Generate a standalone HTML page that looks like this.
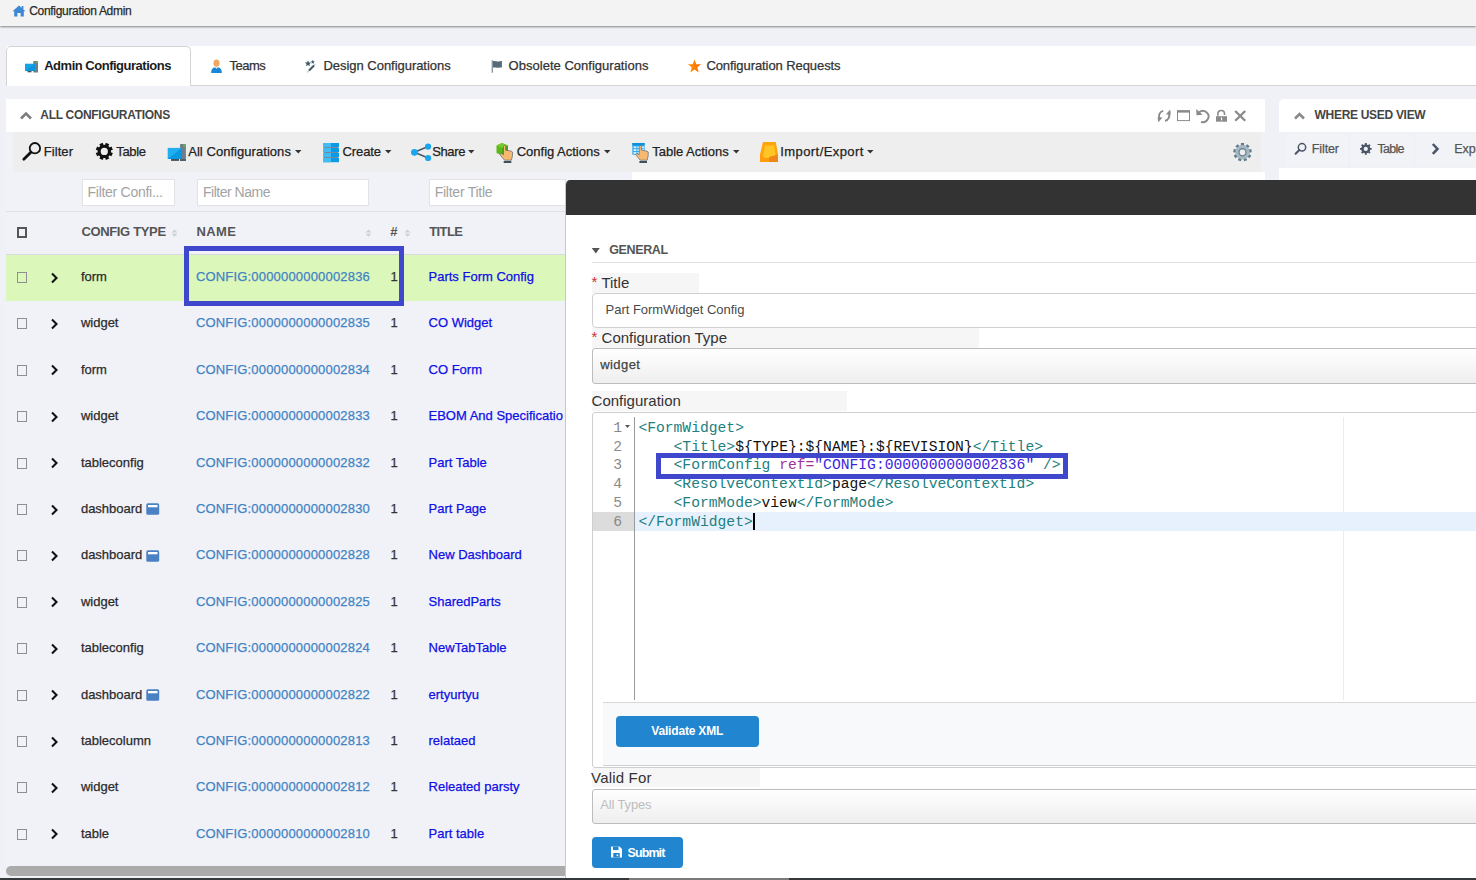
<!DOCTYPE html>
<html><head><meta charset="utf-8"><style>
html,body{margin:0;padding:0;width:1476px;height:880px;overflow:hidden;background:#f0f1f6;position:relative;font-family:'Liberation Sans', sans-serif}

div{}
</style></head><body>
<div style="position:absolute;left:0px;top:0px;width:1476px;height:26px;z-index:1;background:#f3f3f3;box-shadow:0 1px 2px rgba(0,0,0,.45);z-index:2"></div><svg style="position:absolute;left:12px;top:5px;z-index:2" width="14" height="12" viewBox="0 0 14 12"><path d="M7 0.5 L13.5 6.3 L11.8 6.3 L11.8 11.5 L8.6 11.5 L8.6 8 L5.4 8 L5.4 11.5 L2.2 11.5 L2.2 6.3 L0.5 6.3 Z" fill="#3d87d5"/><rect x="9.6" y="1" width="1.8" height="3" fill="#3d87d5"/></svg><div style="position:absolute;left:6px;top:46px;width:1470px;height:40px;z-index:1;background:#fff;border-bottom:1px solid #d4d4d5;box-sizing:border-box"></div><div style="position:absolute;left:6px;top:46px;width:185px;height:40px;z-index:1;background:#fff;border:1px solid #d4d4d5;border-bottom:none;border-radius:5px 5px 0 0;box-sizing:border-box"></div><svg style="position:absolute;left:24px;top:60px;z-index:2" width="15" height="14" viewBox="0 0 15 14"><rect x="9.3" y="1" width="4.7" height="11.5" rx="0.6" fill="#6f7f8a"/><rect x="11.8" y="1.6" width="1.6" height="1.4" fill="#6bc23a"/><rect x="1" y="3.7" width="10.2" height="7.3" fill="#17a3ea"/><path d="M1 11 L11.2 3.7 L11.2 11 Z" fill="#0b95dc"/><rect x="3.5" y="11" width="4" height="1.3" fill="#45535c"/></svg><svg style="position:absolute;left:210px;top:59px;z-index:2" width="14" height="15" viewBox="0 0 14 15"><ellipse cx="6.5" cy="4.2" rx="3" ry="3.6" fill="#f2a65e"/><path d="M1.2 14 C1.2 10 3 8.6 5 8.6 L8 8.6 C10 8.6 11.8 10 11.8 14 Z" fill="#1a86d6"/><path d="M5 8.6 L6.5 9.8 L8 8.6 Z" fill="#fff"/></svg><svg style="position:absolute;left:303px;top:59px;z-index:2" width="15" height="15" viewBox="0 0 15 15"><path d="M5 1.2 L5.9 3.4 L8.2 3.5 L6.4 5 L7 7.3 L5 6 L3 7.3 L3.6 5 L1.8 3.5 L4.1 3.4 Z" fill="#3f5866"/><path d="M9.8 0.8 L10.4 2.2 L11.9 2.3 L10.7 3.2 L11.1 4.7 L9.8 3.9 L8.5 4.7 L8.9 3.2 L7.7 2.3 L9.2 2.2 Z" fill="#3f5866"/><path d="M4 13.5 L12.5 5" stroke="#c9d3d8" stroke-width="1.6"/><path d="M6 11.5 L11 6.5" stroke="#3f5866" stroke-width="1.9"/></svg><svg style="position:absolute;left:490px;top:59px;z-index:2" width="14" height="15" viewBox="0 0 14 15"><rect x="1.6" y="1.2" width="1.4" height="12.5" fill="#8a9aa4"/><path d="M3 2 C5 1.5 7 2.8 9 2.4 C10 2.2 11 2 11.9 2 L11.9 8.6 C10 8.6 9 9 7 8.7 C5.5 8.4 4.5 8.5 3 8.6 Z" fill="#566b77"/></svg><svg style="position:absolute;left:687px;top:58px;z-index:2" width="16" height="16" viewBox="0 0 16 16"><defs><linearGradient id="sg" x1="0" x2="1"><stop offset="0" stop-color="#ff9a00"/><stop offset="1" stop-color="#ff6600"/></linearGradient></defs><path d="M7.5 1.5 L9.3 6.2 L14.2 6.2 L10.3 9.3 L11.7 14.5 L7.5 11.6 L3.3 14.5 L4.7 9.3 L0.8 6.2 L5.7 6.2 Z" fill="url(#sg)"/></svg><div style="position:absolute;left:6px;top:99px;width:1259px;height:781px;z-index:1;background:#f1f2f7"></div><div style="position:absolute;left:6px;top:99px;width:1259px;height:33px;z-index:1;background:#fff"></div><svg style="position:absolute;left:19px;top:110px;z-index:2" width="14" height="11" viewBox="0 0 14 11"><path d="M2 8.5 L7 3.5 L12 8.5" fill="none" stroke="#7d7d7d" stroke-width="2.6"/></svg><svg style="position:absolute;left:1157px;top:109px;z-index:2" width="15" height="14" viewBox="0 0 15 14"><path d="M2.6 9.6 A5.3 5.3 0 0 1 6.2 1.9" fill="none" stroke="#8a8a8a" stroke-width="1.9"/><path d="M11.6 4.1 A5.3 5.3 0 0 1 8 11.9" fill="none" stroke="#8a8a8a" stroke-width="1.9"/><path d="M0.6 8.2 L5.6 8.4 L1.2 13.2 Z" fill="#8a8a8a"/><path d="M13.8 5.6 L8.8 5.4 L13.2 0.6 Z" fill="#8a8a8a"/></svg><svg style="position:absolute;left:1176px;top:109px;z-index:2" width="15" height="13" viewBox="0 0 15 13"><rect x="1.5" y="2" width="12" height="9.6" fill="none" stroke="#8a8a8a" stroke-width="1"/><rect x="1" y="1.2" width="13" height="2.4" fill="#8a8a8a"/></svg><svg style="position:absolute;left:1195px;top:108px;z-index:2" width="16" height="16" viewBox="0 0 16 16"><path d="M4.2 4.3 A5.6 5.6 0 1 1 6 13.8" fill="none" stroke="#8a8a8a" stroke-width="1.9"/><path d="M1.2 1 L1.5 7.3 L7.6 6.7 Z" fill="#8a8a8a"/></svg><svg style="position:absolute;left:1215px;top:109px;z-index:2" width="13" height="14" viewBox="0 0 13 14"><path d="M2.9 6.8 L2.9 4.8 A3.3 3.3 0 0 1 9.5 4.8 L9.5 6" fill="none" stroke="#8a8a8a" stroke-width="1.6"/><rect x="1" y="7.2" width="11" height="5.5" fill="#8a8a8a"/><rect x="6" y="8.4" width="1.1" height="3" fill="#fff"/></svg><svg style="position:absolute;left:1233px;top:109px;z-index:2" width="14" height="13" viewBox="0 0 14 13"><path d="M2.2 2 L12.2 11.8 M12.2 2 L2.2 11.8" stroke="#8a8a8a" stroke-width="2.3"/></svg><div style="position:absolute;left:13px;top:132px;width:1248px;height:40px;z-index:1;background:#eeeeee"></div><svg style="position:absolute;left:21px;top:141px;z-index:2" width="21" height="21" viewBox="0 0 21 21"><circle cx="13.9" cy="7.2" r="5.2" fill="none" stroke="#111" stroke-width="1.8"/><path d="M9.9 11.2 L2.8 18.3" stroke="#111" stroke-width="2.8" stroke-linecap="round"/></svg><svg style="position:absolute;left:94px;top:141px;z-index:2" width="21" height="21" viewBox="0 0 21 21"><path d="M11.08 4.05 L11.83 1.84 L15.27 3.26 L14.24 5.35 L15.35 6.46 L17.44 5.43 L18.86 8.87 L16.65 9.62 L16.65 11.18 L18.86 11.93 L17.44 15.37 L15.35 14.34 L14.24 15.45 L15.27 17.54 L11.83 18.96 L11.08 16.75 L9.52 16.75 L8.77 18.96 L5.33 17.54 L6.36 15.45 L5.25 14.34 L3.16 15.37 L1.74 11.93 L3.95 11.18 L3.95 9.62 L1.74 8.87 L3.16 5.43 L5.25 6.46 L6.36 5.35 L5.33 3.26 L8.77 1.84 L9.52 4.05 Z" fill="#111"/><circle cx="10.3" cy="10.4" r="6.6000000000000005" fill="#111"/><circle cx="10.3" cy="10.4" r="3.6" fill="#eeeeee"/></svg><svg style="position:absolute;left:166px;top:142px;z-index:2" width="22" height="21" viewBox="0 0 22 21"><rect x="14" y="2" width="5.9" height="16.9" rx="0.6" fill="#6f7f8a"/><rect x="17.4" y="2.6" width="1.8" height="1.9" fill="#6bc23a"/><rect x="1.7" y="5.9" width="14.3" height="11.1" fill="#20aef0"/><path d="M1.7 17 L16 5.9 L16 17 Z" fill="#0a98e0"/><rect x="5" y="17" width="8" height="1.9" fill="#45535c"/><rect x="14" y="17.2" width="5.9" height="1.7" fill="#4d5a63"/></svg><svg style="position:absolute;left:294px;top:149px;z-index:2" width="9" height="6" viewBox="0 0 9 6"><path d="M1 1 L7.5 1 L4.25 4.6 Z" fill="#333"/></svg><svg style="position:absolute;left:322px;top:142px;z-index:2" width="18" height="21" viewBox="0 0 18 21"><g><rect x="1" y="1" width="16" height="4.2" fill="#0b9be6"/><rect x="1" y="1" width="8" height="4.2" fill="#40bdf7"/><rect x="1" y="6" width="16" height="4.2" fill="#0b9be6"/><rect x="1" y="6" width="8" height="4.2" fill="#40bdf7"/><rect x="1" y="11" width="16" height="4.2" fill="#0b9be6"/><rect x="1" y="11" width="8" height="4.2" fill="#40bdf7"/><rect x="1" y="16" width="16" height="4.2" fill="#0b9be6"/><rect x="1" y="16" width="8" height="4.2" fill="#40bdf7"/><rect x="1.8" y="5.2" width="14.4" height="0.8" fill="#687782"/><rect x="1.8" y="10.2" width="14.4" height="0.8" fill="#687782"/><rect x="1.8" y="15.2" width="14.4" height="0.8" fill="#687782"/></g></svg><svg style="position:absolute;left:384px;top:149px;z-index:2" width="9" height="6" viewBox="0 0 9 6"><path d="M1 1 L7.5 1 L4.25 4.6 Z" fill="#333"/></svg><svg style="position:absolute;left:409px;top:143px;z-index:2" width="23" height="19" viewBox="0 0 23 19"><path d="M5.4 9.3 L19.1 3.6 M5.4 9.3 L19.1 15" stroke="#485c68" stroke-width="1.6"/><circle cx="5.4" cy="9.3" r="3.4" fill="#1aa6ee"/><circle cx="19.1" cy="3.6" r="3.1" fill="#1aa6ee"/><circle cx="19.1" cy="15" r="3.1" fill="#1aa6ee"/></svg><svg style="position:absolute;left:467px;top:149px;z-index:2" width="9" height="6" viewBox="0 0 9 6"><path d="M1 1 L7.5 1 L4.25 4.6 Z" fill="#333"/></svg><svg style="position:absolute;left:495px;top:142px;z-index:2" width="20" height="21" viewBox="0 0 20 21"><path d="M1.5 3.5 L7 1 L13 3.5 L13 11 L7 13.5 L1.5 11 Z" fill="#5cb81b"/><path d="M7 6 L13 3.5 L13 11 L7 13.5 Z" fill="#4aa410"/><path d="M1.5 3.5 L7 6 L13 3.5 L7 1 Z" fill="#76cc2e"/><path d="M8.5 4.4 l0 8.3 l-2.2 -1.4 l-1.4 1.3 l4.6 5.6 l6.9 0 l1.1 -4.4 l0 -3.8 l-1.4 -0.9 l-5.4 -0.9 l0 -3.8 c0 -1.3 -2.2 -1.3 -2.2 0 Z" fill="#f7b871" stroke="#586a74" stroke-width="0.7"/><rect x="8.7" y="19.0" width="7.6" height="2.6" fill="#3e525d"/></svg><svg style="position:absolute;left:603px;top:149px;z-index:2" width="9" height="6" viewBox="0 0 9 6"><path d="M1 1 L7.5 1 L4.25 4.6 Z" fill="#333"/></svg><svg style="position:absolute;left:631px;top:142px;z-index:2" width="20" height="21" viewBox="0 0 20 21"><rect x="1.3" y="1" width="12.3" height="11.7" fill="#30aaf0"/><rect x="1.3" y="1" width="12.3" height="2.4" fill="#0892e0"/><rect x="2.6" y="4.4" width="2.8" height="1.8" fill="#d8f0ff"/><rect x="6.4" y="4.4" width="2.8" height="1.8" fill="#d8f0ff"/><rect x="10.2" y="4.4" width="2.8" height="1.8" fill="#d8f0ff"/><rect x="2.6" y="7.2" width="2.8" height="1.8" fill="#d8f0ff"/><rect x="6.4" y="7.2" width="2.8" height="1.8" fill="#d8f0ff"/><rect x="10.2" y="7.2" width="2.8" height="1.8" fill="#d8f0ff"/><rect x="2.6" y="10.0" width="2.8" height="1.8" fill="#d8f0ff"/><rect x="6.4" y="10.0" width="2.8" height="1.8" fill="#d8f0ff"/><rect x="10.2" y="10.0" width="2.8" height="1.8" fill="#d8f0ff"/><path d="M8.2 4.4 l0 8.3 l-2.2 -1.4 l-1.4 1.3 l4.6 5.6 l6.9 0 l1.1 -4.4 l0 -3.8 l-1.4 -0.9 l-5.4 -0.9 l0 -3.8 c0 -1.3 -2.2 -1.3 -2.2 0 Z" fill="#f7b871" stroke="#586a74" stroke-width="0.7"/><rect x="8.399999999999999" y="19.0" width="7.6" height="2.6" fill="#3e525d"/></svg><svg style="position:absolute;left:732px;top:149px;z-index:2" width="9" height="6" viewBox="0 0 9 6"><path d="M1 1 L7.5 1 L4.25 4.6 Z" fill="#333"/></svg><svg style="position:absolute;left:759px;top:141px;z-index:2" width="21" height="22" viewBox="0 0 21 22"><path d="M4 1 L16.8 1 L19 13.5 L19 21 L1 21 L1 13.5 Z" fill="#ffa40a"/><path d="M6 4.5 L15 4.5 L16.8 15.5 C16.8 16.5 16 17 15 17 L6 17 C5 17 4.2 16.5 4.2 15.5 Z" fill="#ffc628"/><path d="M10 16 L19 13.5 L19 21 L10 21 Z" fill="#f08518"/><path d="M1 13.5 L5 16.8 L10 17 L10 21 L1 21 Z" fill="#ff9d0a"/></svg><svg style="position:absolute;left:866px;top:149px;z-index:2" width="9" height="6" viewBox="0 0 9 6"><path d="M1 1 L7.5 1 L4.25 4.6 Z" fill="#333"/></svg><svg style="position:absolute;left:1232px;top:142px;z-index:2" width="22" height="22" viewBox="0 0 22 22"><path d="M9.01 3.46 L8.89 1.04 L12.11 1.04 L11.99 3.46 L13.69 4.08 L15.15 2.15 L17.62 4.22 L15.97 6.00 L16.87 7.56 L19.24 7.02 L19.80 10.20 L17.39 10.50 L17.08 12.27 L19.24 13.38 L17.62 16.18 L15.59 14.86 L14.21 16.02 L15.15 18.25 L12.11 19.36 L11.40 17.04 L9.60 17.04 L8.89 19.36 L5.85 18.25 L6.79 16.02 L5.41 14.86 L3.38 16.18 L1.76 13.38 L3.92 12.27 L3.61 10.50 L1.20 10.20 L1.76 7.02 L4.13 7.56 L5.03 6.00 L3.38 4.22 L5.85 2.15 L7.31 4.08 Z" fill="#5f7a88"/><circle cx="10.5" cy="10.2" r="7.1000000000000005" fill="#a6b9c3"/><circle cx="10.5" cy="10.2" r="2.8" fill="#eeeeee"/><circle cx="10.5" cy="10.2" r="3.6" fill="none" stroke="#6a8592" stroke-width="1.2"/></svg><div style="position:absolute;left:632px;top:172px;width:633px;height:8px;z-index:1;background:#fff"></div><div style="position:absolute;left:6px;top:211px;width:1259px;height:1px;z-index:1;background:#dfe0e5"></div><div style="position:absolute;left:82px;top:178.5px;width:92.5px;height:27.0px;z-index:1;background:#fff;border:1px solid #e3e3e6;box-sizing:border-box"></div><div style="position:absolute;left:197px;top:178.5px;width:171.5px;height:27.0px;z-index:1;background:#fff;border:1px solid #e3e3e6;box-sizing:border-box"></div><div style="position:absolute;left:429px;top:178.5px;width:137px;height:27.0px;z-index:1;background:#fff;border:1px solid #e3e3e6;box-sizing:border-box"></div><div style="position:absolute;left:17px;top:227px;width:10px;height:11px;z-index:1;border:2px solid #555;box-sizing:border-box"></div><svg style="position:absolute;left:171px;top:229px;z-index:2" width="7" height="8" viewBox="0 0 7 8"><path d="M3.5 0.5 L6.5 3.5 L0.5 3.5 Z M0.5 4.8 L6.5 4.8 L3.5 7.8 Z" fill="#cfcfcf"/></svg><svg style="position:absolute;left:365px;top:229px;z-index:2" width="7" height="8" viewBox="0 0 7 8"><path d="M3.5 0.5 L6.5 3.5 L0.5 3.5 Z M0.5 4.8 L6.5 4.8 L3.5 7.8 Z" fill="#cfcfcf"/></svg><svg style="position:absolute;left:404px;top:229px;z-index:2" width="7" height="8" viewBox="0 0 7 8"><path d="M3.5 0.5 L6.5 3.5 L0.5 3.5 Z M0.5 4.8 L6.5 4.8 L3.5 7.8 Z" fill="#cfcfcf"/></svg><div style="position:absolute;left:6px;top:254px;width:560px;height:1px;z-index:1;background:#d9dae0"></div><div style="position:absolute;left:6px;top:255px;width:560px;height:45.80000000000001px;z-index:1;background:#dcf7ba"></div><div style="position:absolute;left:17px;top:272px;width:10px;height:11px;z-index:1;border:1.5px solid #8e8e94;box-sizing:border-box"></div><svg style="position:absolute;left:50px;top:271.5px;z-index:2" width="9" height="12" viewBox="0 0 9 12"><path d="M2 1.5 L6.5 6 L2 10.5" fill="none" stroke="#111" stroke-width="2.1"/></svg><div style="position:absolute;left:17px;top:318px;width:10px;height:11px;z-index:1;border:1.5px solid #8e8e94;box-sizing:border-box"></div><svg style="position:absolute;left:50px;top:317.9px;z-index:2" width="9" height="12" viewBox="0 0 9 12"><path d="M2 1.5 L6.5 6 L2 10.5" fill="none" stroke="#111" stroke-width="2.1"/></svg><div style="position:absolute;left:17px;top:365px;width:10px;height:11px;z-index:1;border:1.5px solid #8e8e94;box-sizing:border-box"></div><svg style="position:absolute;left:50px;top:364.3px;z-index:2" width="9" height="12" viewBox="0 0 9 12"><path d="M2 1.5 L6.5 6 L2 10.5" fill="none" stroke="#111" stroke-width="2.1"/></svg><div style="position:absolute;left:17px;top:411px;width:10px;height:11px;z-index:1;border:1.5px solid #8e8e94;box-sizing:border-box"></div><svg style="position:absolute;left:50px;top:410.7px;z-index:2" width="9" height="12" viewBox="0 0 9 12"><path d="M2 1.5 L6.5 6 L2 10.5" fill="none" stroke="#111" stroke-width="2.1"/></svg><div style="position:absolute;left:17px;top:458px;width:10px;height:11px;z-index:1;border:1.5px solid #8e8e94;box-sizing:border-box"></div><svg style="position:absolute;left:50px;top:457.1px;z-index:2" width="9" height="12" viewBox="0 0 9 12"><path d="M2 1.5 L6.5 6 L2 10.5" fill="none" stroke="#111" stroke-width="2.1"/></svg><div style="position:absolute;left:17px;top:504px;width:10px;height:11px;z-index:1;border:1.5px solid #8e8e94;box-sizing:border-box"></div><svg style="position:absolute;left:50px;top:503.5px;z-index:2" width="9" height="12" viewBox="0 0 9 12"><path d="M2 1.5 L6.5 6 L2 10.5" fill="none" stroke="#111" stroke-width="2.1"/></svg><svg style="position:absolute;left:146px;top:503.2px;z-index:2" width="14" height="12" viewBox="0 0 14 12"><rect x="0.3" y="0.3" width="12.9" height="11.5" rx="1.6" fill="#4a80c4"/><rect x="2" y="2" width="9.5" height="2.3" fill="#fff"/></svg><div style="position:absolute;left:17px;top:550px;width:10px;height:11px;z-index:1;border:1.5px solid #8e8e94;box-sizing:border-box"></div><svg style="position:absolute;left:50px;top:549.9px;z-index:2" width="9" height="12" viewBox="0 0 9 12"><path d="M2 1.5 L6.5 6 L2 10.5" fill="none" stroke="#111" stroke-width="2.1"/></svg><svg style="position:absolute;left:146px;top:549.6px;z-index:2" width="14" height="12" viewBox="0 0 14 12"><rect x="0.3" y="0.3" width="12.9" height="11.5" rx="1.6" fill="#4a80c4"/><rect x="2" y="2" width="9.5" height="2.3" fill="#fff"/></svg><div style="position:absolute;left:17px;top:597px;width:10px;height:11px;z-index:1;border:1.5px solid #8e8e94;box-sizing:border-box"></div><svg style="position:absolute;left:50px;top:596.3px;z-index:2" width="9" height="12" viewBox="0 0 9 12"><path d="M2 1.5 L6.5 6 L2 10.5" fill="none" stroke="#111" stroke-width="2.1"/></svg><div style="position:absolute;left:17px;top:643px;width:10px;height:11px;z-index:1;border:1.5px solid #8e8e94;box-sizing:border-box"></div><svg style="position:absolute;left:50px;top:642.7px;z-index:2" width="9" height="12" viewBox="0 0 9 12"><path d="M2 1.5 L6.5 6 L2 10.5" fill="none" stroke="#111" stroke-width="2.1"/></svg><div style="position:absolute;left:17px;top:690px;width:10px;height:11px;z-index:1;border:1.5px solid #8e8e94;box-sizing:border-box"></div><svg style="position:absolute;left:50px;top:689.1px;z-index:2" width="9" height="12" viewBox="0 0 9 12"><path d="M2 1.5 L6.5 6 L2 10.5" fill="none" stroke="#111" stroke-width="2.1"/></svg><svg style="position:absolute;left:146px;top:688.8px;z-index:2" width="14" height="12" viewBox="0 0 14 12"><rect x="0.3" y="0.3" width="12.9" height="11.5" rx="1.6" fill="#4a80c4"/><rect x="2" y="2" width="9.5" height="2.3" fill="#fff"/></svg><div style="position:absolute;left:17px;top:736px;width:10px;height:11px;z-index:1;border:1.5px solid #8e8e94;box-sizing:border-box"></div><svg style="position:absolute;left:50px;top:735.5px;z-index:2" width="9" height="12" viewBox="0 0 9 12"><path d="M2 1.5 L6.5 6 L2 10.5" fill="none" stroke="#111" stroke-width="2.1"/></svg><div style="position:absolute;left:17px;top:782px;width:10px;height:11px;z-index:1;border:1.5px solid #8e8e94;box-sizing:border-box"></div><svg style="position:absolute;left:50px;top:781.9px;z-index:2" width="9" height="12" viewBox="0 0 9 12"><path d="M2 1.5 L6.5 6 L2 10.5" fill="none" stroke="#111" stroke-width="2.1"/></svg><div style="position:absolute;left:17px;top:829px;width:10px;height:11px;z-index:1;border:1.5px solid #8e8e94;box-sizing:border-box"></div><svg style="position:absolute;left:50px;top:828.3px;z-index:2" width="9" height="12" viewBox="0 0 9 12"><path d="M2 1.5 L6.5 6 L2 10.5" fill="none" stroke="#111" stroke-width="2.1"/></svg><div style="position:absolute;left:6px;top:866px;width:560px;height:9.5px;z-index:1;background:#ababab;border-radius:5px 0 0 5px"></div><div style="position:absolute;left:0px;top:877.8px;width:1476px;height:2.2000000000000455px;z-index:1;background:#36393c;z-index:30"></div><div style="position:absolute;left:629px;top:877.8px;width:160px;height:2.2000000000000455px;z-index:1;background:#7a7a7a;z-index:31"></div><div style="position:absolute;left:1279px;top:99px;width:197px;height:781px;z-index:1;background:#fff;border-radius:5px 0 0 0"></div><div style="position:absolute;left:1279px;top:132px;width:197px;height:36px;z-index:1;background:#f0f1f6"></div><div style="position:absolute;left:1286px;top:134px;width:62px;height:32.5px;z-index:1;background:#f2f3f7;border-radius:3px"></div><div style="position:absolute;left:1351px;top:134px;width:62px;height:32.5px;z-index:1;background:#f2f3f7;border-radius:3px"></div><div style="position:absolute;left:1416px;top:134px;width:60px;height:32.5px;z-index:1;background:#f2f3f7;border-radius:3px"></div><svg style="position:absolute;left:1293px;top:110px;z-index:2" width="14" height="11" viewBox="0 0 14 11"><path d="M2 8.5 L6.5 4 L11 8.5" fill="none" stroke="#8a8a8a" stroke-width="2.6"/></svg><svg style="position:absolute;left:1294px;top:142px;z-index:2" width="14" height="14" viewBox="0 0 14 14"><circle cx="8" cy="5.3" r="3.7" fill="none" stroke="#4b5568" stroke-width="1.5"/><path d="M5.3 8 L1.6 11.8" stroke="#4b5568" stroke-width="2" stroke-linecap="round"/></svg><svg style="position:absolute;left:1359px;top:142px;z-index:2" width="14" height="14" viewBox="0 0 14 14"><path d="M5.92 2.69 L5.83 1.08 L7.77 1.08 L7.68 2.69 L9.15 3.30 L10.23 2.10 L11.60 3.47 L10.40 4.55 L11.01 6.02 L12.62 5.93 L12.62 7.87 L11.01 7.78 L10.40 9.25 L11.60 10.33 L10.23 11.70 L9.15 10.50 L7.68 11.11 L7.77 12.72 L5.83 12.72 L5.92 11.11 L4.45 10.50 L3.37 11.70 L2.00 10.33 L3.20 9.25 L2.59 7.78 L0.98 7.87 L0.98 5.93 L2.59 6.02 L3.20 4.55 L2.00 3.47 L3.37 2.10 L4.45 3.30 Z" fill="#4b5568"/><circle cx="6.8" cy="6.9" r="4.5" fill="#4b5568"/><circle cx="6.8" cy="6.9" r="2.1" fill="#f2f3f7"/></svg><svg style="position:absolute;left:1430px;top:142px;z-index:2" width="11" height="14" viewBox="0 0 11 14"><path d="M2.8 2 L7.5 6.9 L2.8 11.8" fill="none" stroke="#4b5568" stroke-width="2.5"/></svg><div style="position:absolute;left:565px;top:180px;width:1000px;height:700px;background:#fff;border-left:1px solid #c8c8c8;border-radius:5px 0 0 0;overflow:hidden;z-index:15;box-sizing:border-box"><div style="position:absolute;left:0;top:0;width:1000px;height:34.6px;background:#333333"></div></div><svg style="position:absolute;left:591px;top:247px;z-index:21" width="10" height="8" viewBox="0 0 10 8"><path d="M0.8 1 L8.8 1 L4.8 6.4 Z" fill="#555"/></svg><div style="position:absolute;left:592px;top:262px;width:884px;height:1px;z-index:20;background:#e2e2e2"></div><div style="position:absolute;left:592px;top:273px;width:107px;height:19.5px;z-index:20;background:#f6f6f6"></div><div style="position:absolute;left:592.3px;top:293.2px;width:907.7px;height:34.80000000000001px;z-index:20;background:#fff;border:1px solid #d0d0d0;border-radius:4px;box-sizing:border-box"></div><div style="position:absolute;left:592px;top:328px;width:387px;height:20px;z-index:20;background:#f6f6f6"></div><div style="position:absolute;left:592px;top:348px;width:908px;height:35.60000000000002px;z-index:20;background:linear-gradient(#ffffff,#eeeeee);border:1px solid #bdbdbd;border-radius:3px;box-sizing:border-box"></div><div style="position:absolute;left:592px;top:391px;width:255px;height:20px;z-index:20;background:#f6f6f6"></div><div style="position:absolute;left:592px;top:411.5px;width:908px;height:356.5px;z-index:20;background:#fff;border:1px solid #cfcfcf;border-radius:3px;box-sizing:border-box"></div><div style="position:absolute;left:634px;top:417px;width:1px;height:283px;z-index:20;background:#9a9a9a"></div><div style="position:absolute;left:1342.5px;top:417px;width:1.0px;height:283px;z-index:20;background:#ececec"></div><div style="position:absolute;left:593px;top:512px;width:41px;height:19px;z-index:20;background:#dcdcdc"></div><div style="position:absolute;left:635px;top:512px;width:841px;height:19px;z-index:20;background:#e7f1fd"></div><div style="position:absolute;left:603px;top:702px;width:873px;height:64px;z-index:20;background:#f8f9fb;border-top:1px solid #d8d8d8;border-bottom:1px solid #d0d0d0;box-sizing:border-box"></div><div style="position:absolute;left:616px;top:716px;width:143px;height:31px;z-index:20;background:#2185d0;border-radius:4px"></div><div style="position:absolute;left:592px;top:768px;width:168px;height:19px;z-index:20;background:#f6f6f6"></div><div style="position:absolute;left:592px;top:788.6px;width:908px;height:35.0px;z-index:20;background:linear-gradient(#ffffff,#eeeeee);border:1px solid #bdbdbd;border-radius:3px;box-sizing:border-box"></div><div style="position:absolute;left:592px;top:836.8px;width:90.70000000000005px;height:31.200000000000045px;z-index:20;background:#2185d0;border-radius:4px"></div><svg style="position:absolute;left:610px;top:845px;z-index:21" width="13" height="14" viewBox="0 0 13 14"><path d="M1 1.5 L9.5 1.5 L12 4 L12 12.5 L1 12.5 Z" fill="#fff"/><rect x="3" y="1.5" width="5.5" height="3.6" fill="#2185d0"/><rect x="3.3" y="8" width="6.4" height="4.5" fill="#2185d0"/><rect x="6.6" y="9.5" width="1.6" height="1.6" fill="#fff"/></svg><div style="position:absolute;left:638.4px;top:418.66px;height:18.86px;line-height:18.86px;font-family:'Liberation Mono', monospace;font-size:14.67px;white-space:pre;z-index:23"><span style="color:#208080">&lt;FormWidget&gt;</span></div><div style="position:absolute;left:598px;width:24px;text-align:right;top:418.66px;height:18.86px;line-height:18.86px;font-family:'Liberation Mono', monospace;font-size:14.67px;color:#8a8a8a;z-index:23">1</div><div style="position:absolute;left:638.4px;top:437.52px;height:18.86px;line-height:18.86px;font-family:'Liberation Mono', monospace;font-size:14.67px;white-space:pre;z-index:23">    <span style="color:#208080">&lt;Title&gt;</span><span style="color:#111">${TYPE}:${NAME}:${REVISION}</span><span style="color:#208080">&lt;/Title&gt;</span></div><div style="position:absolute;left:598px;width:24px;text-align:right;top:437.52px;height:18.86px;line-height:18.86px;font-family:'Liberation Mono', monospace;font-size:14.67px;color:#8a8a8a;z-index:23">2</div><div style="position:absolute;left:638.4px;top:456.38px;height:18.86px;line-height:18.86px;font-family:'Liberation Mono', monospace;font-size:14.67px;white-space:pre;z-index:23">    <span style="color:#208080">&lt;FormConfig </span><span style="color:#a0309a">ref=</span><span style="color:#3d26e0">"CONFIG:0000000000002836"</span><span style="color:#208080"> /&gt;</span></div><div style="position:absolute;left:598px;width:24px;text-align:right;top:456.38px;height:18.86px;line-height:18.86px;font-family:'Liberation Mono', monospace;font-size:14.67px;color:#8a8a8a;z-index:23">3</div><div style="position:absolute;left:638.4px;top:475.24px;height:18.86px;line-height:18.86px;font-family:'Liberation Mono', monospace;font-size:14.67px;white-space:pre;z-index:23">    <span style="color:#208080">&lt;ResolveContextId&gt;</span><span style="color:#111">page</span><span style="color:#208080">&lt;/ResolveContextId&gt;</span></div><div style="position:absolute;left:598px;width:24px;text-align:right;top:475.24px;height:18.86px;line-height:18.86px;font-family:'Liberation Mono', monospace;font-size:14.67px;color:#8a8a8a;z-index:23">4</div><div style="position:absolute;left:638.4px;top:494.10px;height:18.86px;line-height:18.86px;font-family:'Liberation Mono', monospace;font-size:14.67px;white-space:pre;z-index:23">    <span style="color:#208080">&lt;FormMode&gt;</span><span style="color:#111">view</span><span style="color:#208080">&lt;/FormMode&gt;</span></div><div style="position:absolute;left:598px;width:24px;text-align:right;top:494.10px;height:18.86px;line-height:18.86px;font-family:'Liberation Mono', monospace;font-size:14.67px;color:#8a8a8a;z-index:23">5</div><div style="position:absolute;left:638.4px;top:512.96px;height:18.86px;line-height:18.86px;font-family:'Liberation Mono', monospace;font-size:14.67px;white-space:pre;z-index:23"><span style="color:#208080">&lt;/FormWidget&gt;</span></div><div style="position:absolute;left:598px;width:24px;text-align:right;top:512.96px;height:18.86px;line-height:18.86px;font-family:'Liberation Mono', monospace;font-size:14.67px;color:#8a8a8a;z-index:23">6</div><svg style="position:absolute;left:624px;top:424px;z-index:21" width="8" height="6" viewBox="0 0 8 6"><path d="M1 1 L6 1 L3.5 4 Z" fill="#555"/></svg><div style="position:absolute;left:753px;top:513px;width:2px;height:17px;z-index:20;background:#000"></div><div style="position:absolute;left:184px;top:246.2px;width:220px;height:59.80000000000001px;z-index:20;border:5px solid #3f48cc;box-sizing:border-box;z-index:40!important"></div><div style="position:absolute;left:656px;top:453.2px;width:412px;height:25.400000000000034px;z-index:20;border:5px solid #3f48cc;box-sizing:border-box;z-index:40!important"></div>
<div style="position:absolute;left:29.28px;top:5.04px;font:normal 12px/12px 'Liberation Sans', sans-serif;color:#2a2a2a;white-space:pre;letter-spacing:-0.314px;z-index:3;-webkit-text-stroke:0.25px #2a2a2a;z-index:3;">Configuration Admin</div><div style="position:absolute;left:44.22px;top:59.00px;font:bold 13px/13px 'Liberation Sans', sans-serif;color:#1b1c1d;white-space:pre;letter-spacing:-0.490px;z-index:3;">Admin Configurations</div><div style="position:absolute;left:229.52px;top:59.00px;font:normal 13px/13px 'Liberation Sans', sans-serif;color:#333;white-space:pre;letter-spacing:-0.530px;z-index:3;-webkit-text-stroke:0.25px #333;">Teams</div><div style="position:absolute;left:323.52px;top:59.00px;font:normal 13px/13px 'Liberation Sans', sans-serif;color:#333;white-space:pre;letter-spacing:-0.037px;z-index:3;-webkit-text-stroke:0.25px #333;">Design Configurations</div><div style="position:absolute;left:508.62px;top:59.00px;font:normal 13px/13px 'Liberation Sans', sans-serif;color:#333;white-space:pre;letter-spacing:0.014px;z-index:3;-webkit-text-stroke:0.25px #333;">Obsolete Configurations</div><div style="position:absolute;left:706.42px;top:59.00px;font:normal 13px/13px 'Liberation Sans', sans-serif;color:#333;white-space:pre;letter-spacing:-0.080px;z-index:3;-webkit-text-stroke:0.25px #333;">Configuration Requests</div><div style="position:absolute;left:40.28px;top:109.34px;font:bold 12px/12px 'Liberation Sans', sans-serif;color:#454545;white-space:pre;letter-spacing:-0.295px;z-index:3;">ALL CONFIGURATIONS</div><div style="position:absolute;left:43.72px;top:145.40px;font:normal 13px/13px 'Liberation Sans', sans-serif;color:#222;white-space:pre;letter-spacing:0.076px;z-index:3;-webkit-text-stroke:0.25px #222;">Filter</div><div style="position:absolute;left:116.22px;top:145.40px;font:normal 13px/13px 'Liberation Sans', sans-serif;color:#222;white-space:pre;letter-spacing:-0.302px;z-index:3;-webkit-text-stroke:0.25px #222;">Table</div><div style="position:absolute;left:188.22px;top:145.40px;font:normal 13px/13px 'Liberation Sans', sans-serif;color:#222;white-space:pre;letter-spacing:0.046px;z-index:3;-webkit-text-stroke:0.25px #222;">All Configurations</div><div style="position:absolute;left:342.62px;top:145.40px;font:normal 13px/13px 'Liberation Sans', sans-serif;color:#222;white-space:pre;letter-spacing:-0.130px;z-index:3;-webkit-text-stroke:0.25px #222;">Create</div><div style="position:absolute;left:432.22px;top:145.40px;font:normal 13px/13px 'Liberation Sans', sans-serif;color:#222;white-space:pre;letter-spacing:-0.380px;z-index:3;-webkit-text-stroke:0.25px #222;">Share</div><div style="position:absolute;left:516.72px;top:145.40px;font:normal 13px/13px 'Liberation Sans', sans-serif;color:#222;white-space:pre;letter-spacing:-0.012px;z-index:3;-webkit-text-stroke:0.25px #222;">Config Actions</div><div style="position:absolute;left:652.22px;top:145.40px;font:normal 13px/13px 'Liberation Sans', sans-serif;color:#222;white-space:pre;letter-spacing:-0.013px;z-index:3;-webkit-text-stroke:0.25px #222;">Table Actions</div><div style="position:absolute;left:780.22px;top:145.40px;font:normal 13px/13px 'Liberation Sans', sans-serif;color:#222;white-space:pre;letter-spacing:0.429px;z-index:3;-webkit-text-stroke:0.25px #222;">Import/Export</div><div style="position:absolute;left:87.56px;top:184.65px;font:normal 14px/14px 'Liberation Sans', sans-serif;color:#a3a3a3;white-space:pre;letter-spacing:-0.278px;z-index:3;font-family:'Liberation Sans', sans-serif">Filter Confi...</div><div style="position:absolute;left:202.96px;top:184.65px;font:normal 14px/14px 'Liberation Sans', sans-serif;color:#a3a3a3;white-space:pre;letter-spacing:-0.488px;z-index:3;">Filter Name</div><div style="position:absolute;left:434.66px;top:184.65px;font:normal 14px/14px 'Liberation Sans', sans-serif;color:#a3a3a3;white-space:pre;letter-spacing:-0.243px;z-index:3;">Filter Title</div><div style="position:absolute;left:81.42px;top:224.70px;font:bold 13px/13px 'Liberation Sans', sans-serif;color:#555;white-space:pre;letter-spacing:-0.345px;z-index:3;">CONFIG TYPE</div><div style="position:absolute;left:196.62px;top:224.70px;font:bold 13px/13px 'Liberation Sans', sans-serif;color:#555;white-space:pre;letter-spacing:0.365px;z-index:3;">NAME</div><div style="position:absolute;left:390.22px;top:224.70px;font:bold 13px/13px 'Liberation Sans', sans-serif;color:#555;white-space:pre;letter-spacing:0.000px;z-index:3;">#</div><div style="position:absolute;left:429.22px;top:224.70px;font:bold 13px/13px 'Liberation Sans', sans-serif;color:#555;white-space:pre;letter-spacing:-0.584px;z-index:3;">TITLE</div><div style="position:absolute;left:80.92px;top:270.00px;font:normal 13px/13px 'Liberation Sans', sans-serif;color:#2b2b2b;white-space:pre;letter-spacing:0.000px;z-index:3;-webkit-text-stroke:0.25px #2b2b2b;">form</div><div style="position:absolute;left:195.92px;top:270.00px;font:normal 13px/13px 'Liberation Sans', sans-serif;color:#4183c4;white-space:pre;letter-spacing:0.183px;z-index:3;-webkit-text-stroke:0.25px #4183c4;">CONFIG:0000000000002836</div><div style="position:absolute;left:390.62px;top:270.00px;font:normal 13px/13px 'Liberation Sans', sans-serif;color:#333;white-space:pre;letter-spacing:0.000px;z-index:3;-webkit-text-stroke:0.25px #333;">1</div><div style="position:absolute;left:428.52px;top:270.00px;font:normal 13px/13px 'Liberation Sans', sans-serif;color:#0f0fe6;white-space:pre;letter-spacing:0.000px;z-index:3;-webkit-text-stroke:0.25px #0f0fe6;">Parts Form Config</div><div style="position:absolute;left:80.92px;top:316.40px;font:normal 13px/13px 'Liberation Sans', sans-serif;color:#2b2b2b;white-space:pre;letter-spacing:0.000px;z-index:3;-webkit-text-stroke:0.25px #2b2b2b;">widget</div><div style="position:absolute;left:195.92px;top:316.40px;font:normal 13px/13px 'Liberation Sans', sans-serif;color:#4183c4;white-space:pre;letter-spacing:0.183px;z-index:3;-webkit-text-stroke:0.25px #4183c4;">CONFIG:0000000000002835</div><div style="position:absolute;left:390.62px;top:316.40px;font:normal 13px/13px 'Liberation Sans', sans-serif;color:#333;white-space:pre;letter-spacing:0.000px;z-index:3;-webkit-text-stroke:0.25px #333;">1</div><div style="position:absolute;left:428.52px;top:316.40px;font:normal 13px/13px 'Liberation Sans', sans-serif;color:#0f0fe6;white-space:pre;letter-spacing:0.000px;z-index:3;-webkit-text-stroke:0.25px #0f0fe6;">CO Widget</div><div style="position:absolute;left:80.92px;top:362.80px;font:normal 13px/13px 'Liberation Sans', sans-serif;color:#2b2b2b;white-space:pre;letter-spacing:0.000px;z-index:3;-webkit-text-stroke:0.25px #2b2b2b;">form</div><div style="position:absolute;left:195.92px;top:362.80px;font:normal 13px/13px 'Liberation Sans', sans-serif;color:#4183c4;white-space:pre;letter-spacing:0.183px;z-index:3;-webkit-text-stroke:0.25px #4183c4;">CONFIG:0000000000002834</div><div style="position:absolute;left:390.62px;top:362.80px;font:normal 13px/13px 'Liberation Sans', sans-serif;color:#333;white-space:pre;letter-spacing:0.000px;z-index:3;-webkit-text-stroke:0.25px #333;">1</div><div style="position:absolute;left:428.52px;top:362.80px;font:normal 13px/13px 'Liberation Sans', sans-serif;color:#0f0fe6;white-space:pre;letter-spacing:0.000px;z-index:3;-webkit-text-stroke:0.25px #0f0fe6;">CO Form</div><div style="position:absolute;left:80.92px;top:409.20px;font:normal 13px/13px 'Liberation Sans', sans-serif;color:#2b2b2b;white-space:pre;letter-spacing:0.000px;z-index:3;-webkit-text-stroke:0.25px #2b2b2b;">widget</div><div style="position:absolute;left:195.92px;top:409.20px;font:normal 13px/13px 'Liberation Sans', sans-serif;color:#4183c4;white-space:pre;letter-spacing:0.183px;z-index:3;-webkit-text-stroke:0.25px #4183c4;">CONFIG:0000000000002833</div><div style="position:absolute;left:390.62px;top:409.20px;font:normal 13px/13px 'Liberation Sans', sans-serif;color:#333;white-space:pre;letter-spacing:0.000px;z-index:3;-webkit-text-stroke:0.25px #333;">1</div><div style="position:absolute;left:428.52px;top:409.20px;font:normal 13px/13px 'Liberation Sans', sans-serif;color:#0f0fe6;white-space:pre;letter-spacing:0.000px;z-index:3;-webkit-text-stroke:0.25px #0f0fe6;">EBOM And Specificatio</div><div style="position:absolute;left:80.92px;top:455.60px;font:normal 13px/13px 'Liberation Sans', sans-serif;color:#2b2b2b;white-space:pre;letter-spacing:0.000px;z-index:3;-webkit-text-stroke:0.25px #2b2b2b;">tableconfig</div><div style="position:absolute;left:195.92px;top:455.60px;font:normal 13px/13px 'Liberation Sans', sans-serif;color:#4183c4;white-space:pre;letter-spacing:0.183px;z-index:3;-webkit-text-stroke:0.25px #4183c4;">CONFIG:0000000000002832</div><div style="position:absolute;left:390.62px;top:455.60px;font:normal 13px/13px 'Liberation Sans', sans-serif;color:#333;white-space:pre;letter-spacing:0.000px;z-index:3;-webkit-text-stroke:0.25px #333;">1</div><div style="position:absolute;left:428.52px;top:455.60px;font:normal 13px/13px 'Liberation Sans', sans-serif;color:#0f0fe6;white-space:pre;letter-spacing:0.000px;z-index:3;-webkit-text-stroke:0.25px #0f0fe6;">Part Table</div><div style="position:absolute;left:80.92px;top:502.00px;font:normal 13px/13px 'Liberation Sans', sans-serif;color:#2b2b2b;white-space:pre;letter-spacing:0.000px;z-index:3;-webkit-text-stroke:0.25px #2b2b2b;">dashboard</div><div style="position:absolute;left:195.92px;top:502.00px;font:normal 13px/13px 'Liberation Sans', sans-serif;color:#4183c4;white-space:pre;letter-spacing:0.183px;z-index:3;-webkit-text-stroke:0.25px #4183c4;">CONFIG:0000000000002830</div><div style="position:absolute;left:390.62px;top:502.00px;font:normal 13px/13px 'Liberation Sans', sans-serif;color:#333;white-space:pre;letter-spacing:0.000px;z-index:3;-webkit-text-stroke:0.25px #333;">1</div><div style="position:absolute;left:428.52px;top:502.00px;font:normal 13px/13px 'Liberation Sans', sans-serif;color:#0f0fe6;white-space:pre;letter-spacing:0.000px;z-index:3;-webkit-text-stroke:0.25px #0f0fe6;">Part Page</div><div style="position:absolute;left:80.92px;top:548.40px;font:normal 13px/13px 'Liberation Sans', sans-serif;color:#2b2b2b;white-space:pre;letter-spacing:0.000px;z-index:3;-webkit-text-stroke:0.25px #2b2b2b;">dashboard</div><div style="position:absolute;left:195.92px;top:548.40px;font:normal 13px/13px 'Liberation Sans', sans-serif;color:#4183c4;white-space:pre;letter-spacing:0.183px;z-index:3;-webkit-text-stroke:0.25px #4183c4;">CONFIG:0000000000002828</div><div style="position:absolute;left:390.62px;top:548.40px;font:normal 13px/13px 'Liberation Sans', sans-serif;color:#333;white-space:pre;letter-spacing:0.000px;z-index:3;-webkit-text-stroke:0.25px #333;">1</div><div style="position:absolute;left:428.52px;top:548.40px;font:normal 13px/13px 'Liberation Sans', sans-serif;color:#0f0fe6;white-space:pre;letter-spacing:0.000px;z-index:3;-webkit-text-stroke:0.25px #0f0fe6;">New Dashboard</div><div style="position:absolute;left:80.92px;top:594.80px;font:normal 13px/13px 'Liberation Sans', sans-serif;color:#2b2b2b;white-space:pre;letter-spacing:0.000px;z-index:3;-webkit-text-stroke:0.25px #2b2b2b;">widget</div><div style="position:absolute;left:195.92px;top:594.80px;font:normal 13px/13px 'Liberation Sans', sans-serif;color:#4183c4;white-space:pre;letter-spacing:0.183px;z-index:3;-webkit-text-stroke:0.25px #4183c4;">CONFIG:0000000000002825</div><div style="position:absolute;left:390.62px;top:594.80px;font:normal 13px/13px 'Liberation Sans', sans-serif;color:#333;white-space:pre;letter-spacing:0.000px;z-index:3;-webkit-text-stroke:0.25px #333;">1</div><div style="position:absolute;left:428.52px;top:594.80px;font:normal 13px/13px 'Liberation Sans', sans-serif;color:#0f0fe6;white-space:pre;letter-spacing:0.000px;z-index:3;-webkit-text-stroke:0.25px #0f0fe6;">SharedParts</div><div style="position:absolute;left:80.92px;top:641.20px;font:normal 13px/13px 'Liberation Sans', sans-serif;color:#2b2b2b;white-space:pre;letter-spacing:0.000px;z-index:3;-webkit-text-stroke:0.25px #2b2b2b;">tableconfig</div><div style="position:absolute;left:195.92px;top:641.20px;font:normal 13px/13px 'Liberation Sans', sans-serif;color:#4183c4;white-space:pre;letter-spacing:0.183px;z-index:3;-webkit-text-stroke:0.25px #4183c4;">CONFIG:0000000000002824</div><div style="position:absolute;left:390.62px;top:641.20px;font:normal 13px/13px 'Liberation Sans', sans-serif;color:#333;white-space:pre;letter-spacing:0.000px;z-index:3;-webkit-text-stroke:0.25px #333;">1</div><div style="position:absolute;left:428.52px;top:641.20px;font:normal 13px/13px 'Liberation Sans', sans-serif;color:#0f0fe6;white-space:pre;letter-spacing:0.000px;z-index:3;-webkit-text-stroke:0.25px #0f0fe6;">NewTabTable</div><div style="position:absolute;left:80.92px;top:687.60px;font:normal 13px/13px 'Liberation Sans', sans-serif;color:#2b2b2b;white-space:pre;letter-spacing:0.000px;z-index:3;-webkit-text-stroke:0.25px #2b2b2b;">dashboard</div><div style="position:absolute;left:195.92px;top:687.60px;font:normal 13px/13px 'Liberation Sans', sans-serif;color:#4183c4;white-space:pre;letter-spacing:0.183px;z-index:3;-webkit-text-stroke:0.25px #4183c4;">CONFIG:0000000000002822</div><div style="position:absolute;left:390.62px;top:687.60px;font:normal 13px/13px 'Liberation Sans', sans-serif;color:#333;white-space:pre;letter-spacing:0.000px;z-index:3;-webkit-text-stroke:0.25px #333;">1</div><div style="position:absolute;left:428.52px;top:687.60px;font:normal 13px/13px 'Liberation Sans', sans-serif;color:#0f0fe6;white-space:pre;letter-spacing:0.000px;z-index:3;-webkit-text-stroke:0.25px #0f0fe6;">ertyurtyu</div><div style="position:absolute;left:80.92px;top:734.00px;font:normal 13px/13px 'Liberation Sans', sans-serif;color:#2b2b2b;white-space:pre;letter-spacing:0.000px;z-index:3;-webkit-text-stroke:0.25px #2b2b2b;">tablecolumn</div><div style="position:absolute;left:195.92px;top:734.00px;font:normal 13px/13px 'Liberation Sans', sans-serif;color:#4183c4;white-space:pre;letter-spacing:0.183px;z-index:3;-webkit-text-stroke:0.25px #4183c4;">CONFIG:0000000000002813</div><div style="position:absolute;left:390.62px;top:734.00px;font:normal 13px/13px 'Liberation Sans', sans-serif;color:#333;white-space:pre;letter-spacing:0.000px;z-index:3;-webkit-text-stroke:0.25px #333;">1</div><div style="position:absolute;left:428.52px;top:734.00px;font:normal 13px/13px 'Liberation Sans', sans-serif;color:#0f0fe6;white-space:pre;letter-spacing:0.000px;z-index:3;-webkit-text-stroke:0.25px #0f0fe6;">relataed</div><div style="position:absolute;left:80.92px;top:780.40px;font:normal 13px/13px 'Liberation Sans', sans-serif;color:#2b2b2b;white-space:pre;letter-spacing:0.000px;z-index:3;-webkit-text-stroke:0.25px #2b2b2b;">widget</div><div style="position:absolute;left:195.92px;top:780.40px;font:normal 13px/13px 'Liberation Sans', sans-serif;color:#4183c4;white-space:pre;letter-spacing:0.183px;z-index:3;-webkit-text-stroke:0.25px #4183c4;">CONFIG:0000000000002812</div><div style="position:absolute;left:390.62px;top:780.40px;font:normal 13px/13px 'Liberation Sans', sans-serif;color:#333;white-space:pre;letter-spacing:0.000px;z-index:3;-webkit-text-stroke:0.25px #333;">1</div><div style="position:absolute;left:428.52px;top:780.40px;font:normal 13px/13px 'Liberation Sans', sans-serif;color:#0f0fe6;white-space:pre;letter-spacing:0.000px;z-index:3;-webkit-text-stroke:0.25px #0f0fe6;">Releated parsty</div><div style="position:absolute;left:80.92px;top:826.80px;font:normal 13px/13px 'Liberation Sans', sans-serif;color:#2b2b2b;white-space:pre;letter-spacing:0.000px;z-index:3;-webkit-text-stroke:0.25px #2b2b2b;">table</div><div style="position:absolute;left:195.92px;top:826.80px;font:normal 13px/13px 'Liberation Sans', sans-serif;color:#4183c4;white-space:pre;letter-spacing:0.183px;z-index:3;-webkit-text-stroke:0.25px #4183c4;">CONFIG:0000000000002810</div><div style="position:absolute;left:390.62px;top:826.80px;font:normal 13px/13px 'Liberation Sans', sans-serif;color:#333;white-space:pre;letter-spacing:0.000px;z-index:3;-webkit-text-stroke:0.25px #333;">1</div><div style="position:absolute;left:428.52px;top:826.80px;font:normal 13px/13px 'Liberation Sans', sans-serif;color:#0f0fe6;white-space:pre;letter-spacing:0.000px;z-index:3;-webkit-text-stroke:0.25px #0f0fe6;">Part table</div><div style="position:absolute;left:1314.58px;top:108.64px;font:bold 12px/12px 'Liberation Sans', sans-serif;color:#454545;white-space:pre;letter-spacing:-0.304px;z-index:3;">WHERE USED VIEW</div><div style="position:absolute;left:1311.85px;top:143.02px;font:normal 12.5px/12.5px 'Liberation Sans', sans-serif;color:#555;white-space:pre;letter-spacing:-0.130px;z-index:3;-webkit-text-stroke:0.25px #555;">Filter</div><div style="position:absolute;left:1377.55px;top:143.02px;font:normal 12.5px/12.5px 'Liberation Sans', sans-serif;color:#555;white-space:pre;letter-spacing:-0.764px;z-index:3;-webkit-text-stroke:0.25px #555;">Table</div><div style="position:absolute;left:1454.25px;top:143.02px;font:normal 12.5px/12.5px 'Liberation Sans', sans-serif;color:#555;white-space:pre;letter-spacing:0.000px;z-index:3;-webkit-text-stroke:0.25px #555;">Expand</div><div style="position:absolute;left:609.25px;top:244.12px;font:bold 12.5px/12.5px 'Liberation Sans', sans-serif;color:#555;white-space:pre;letter-spacing:-0.382px;z-index:22;">GENERAL</div><div style="position:absolute;left:591.40px;top:273.80px;font:normal 15px/15px 'Liberation Sans', sans-serif;color:#d03030;white-space:pre;letter-spacing:0.000px;z-index:22;">*</div><div style="position:absolute;left:601.40px;top:275.00px;font:normal 15px/15px 'Liberation Sans', sans-serif;color:#333;white-space:pre;letter-spacing:0.017px;z-index:22;">Title</div><div style="position:absolute;left:605.62px;top:302.90px;font:normal 13px/13px 'Liberation Sans', sans-serif;color:#4a4a4a;white-space:pre;letter-spacing:-0.032px;z-index:22;">Part FormWidget Config</div><div style="position:absolute;left:591.40px;top:328.80px;font:normal 15px/15px 'Liberation Sans', sans-serif;color:#d03030;white-space:pre;letter-spacing:0.000px;z-index:22;">*</div><div style="position:absolute;left:601.60px;top:329.90px;font:normal 15px/15px 'Liberation Sans', sans-serif;color:#333;white-space:pre;letter-spacing:-0.015px;z-index:22;">Configuration Type</div><div style="position:absolute;left:600.22px;top:357.90px;font:normal 13px/13px 'Liberation Sans', sans-serif;color:#444;white-space:pre;letter-spacing:0.418px;z-index:22;-webkit-text-stroke:0.25px #444;">widget</div><div style="position:absolute;left:591.60px;top:393.00px;font:normal 15px/15px 'Liberation Sans', sans-serif;color:#333;white-space:pre;letter-spacing:0.002px;z-index:22;">Configuration</div><div style="position:absolute;left:651.28px;top:725.04px;font:bold 12px/12px 'Liberation Sans', sans-serif;color:#fff;white-space:pre;letter-spacing:-0.176px;z-index:22;">Validate XML</div><div style="position:absolute;left:591.10px;top:770.30px;font:normal 15px/15px 'Liberation Sans', sans-serif;color:#333;white-space:pre;letter-spacing:0.180px;z-index:22;">Valid For</div><div style="position:absolute;left:600.22px;top:798.10px;font:normal 13px/13px 'Liberation Sans', sans-serif;color:#bdbdbd;white-space:pre;letter-spacing:-0.147px;z-index:22;">All Types</div><div style="position:absolute;left:627.45px;top:846.72px;font:bold 12.5px/12.5px 'Liberation Sans', sans-serif;color:#fff;white-space:pre;letter-spacing:-0.887px;z-index:22;">Submit</div>
</body></html>
